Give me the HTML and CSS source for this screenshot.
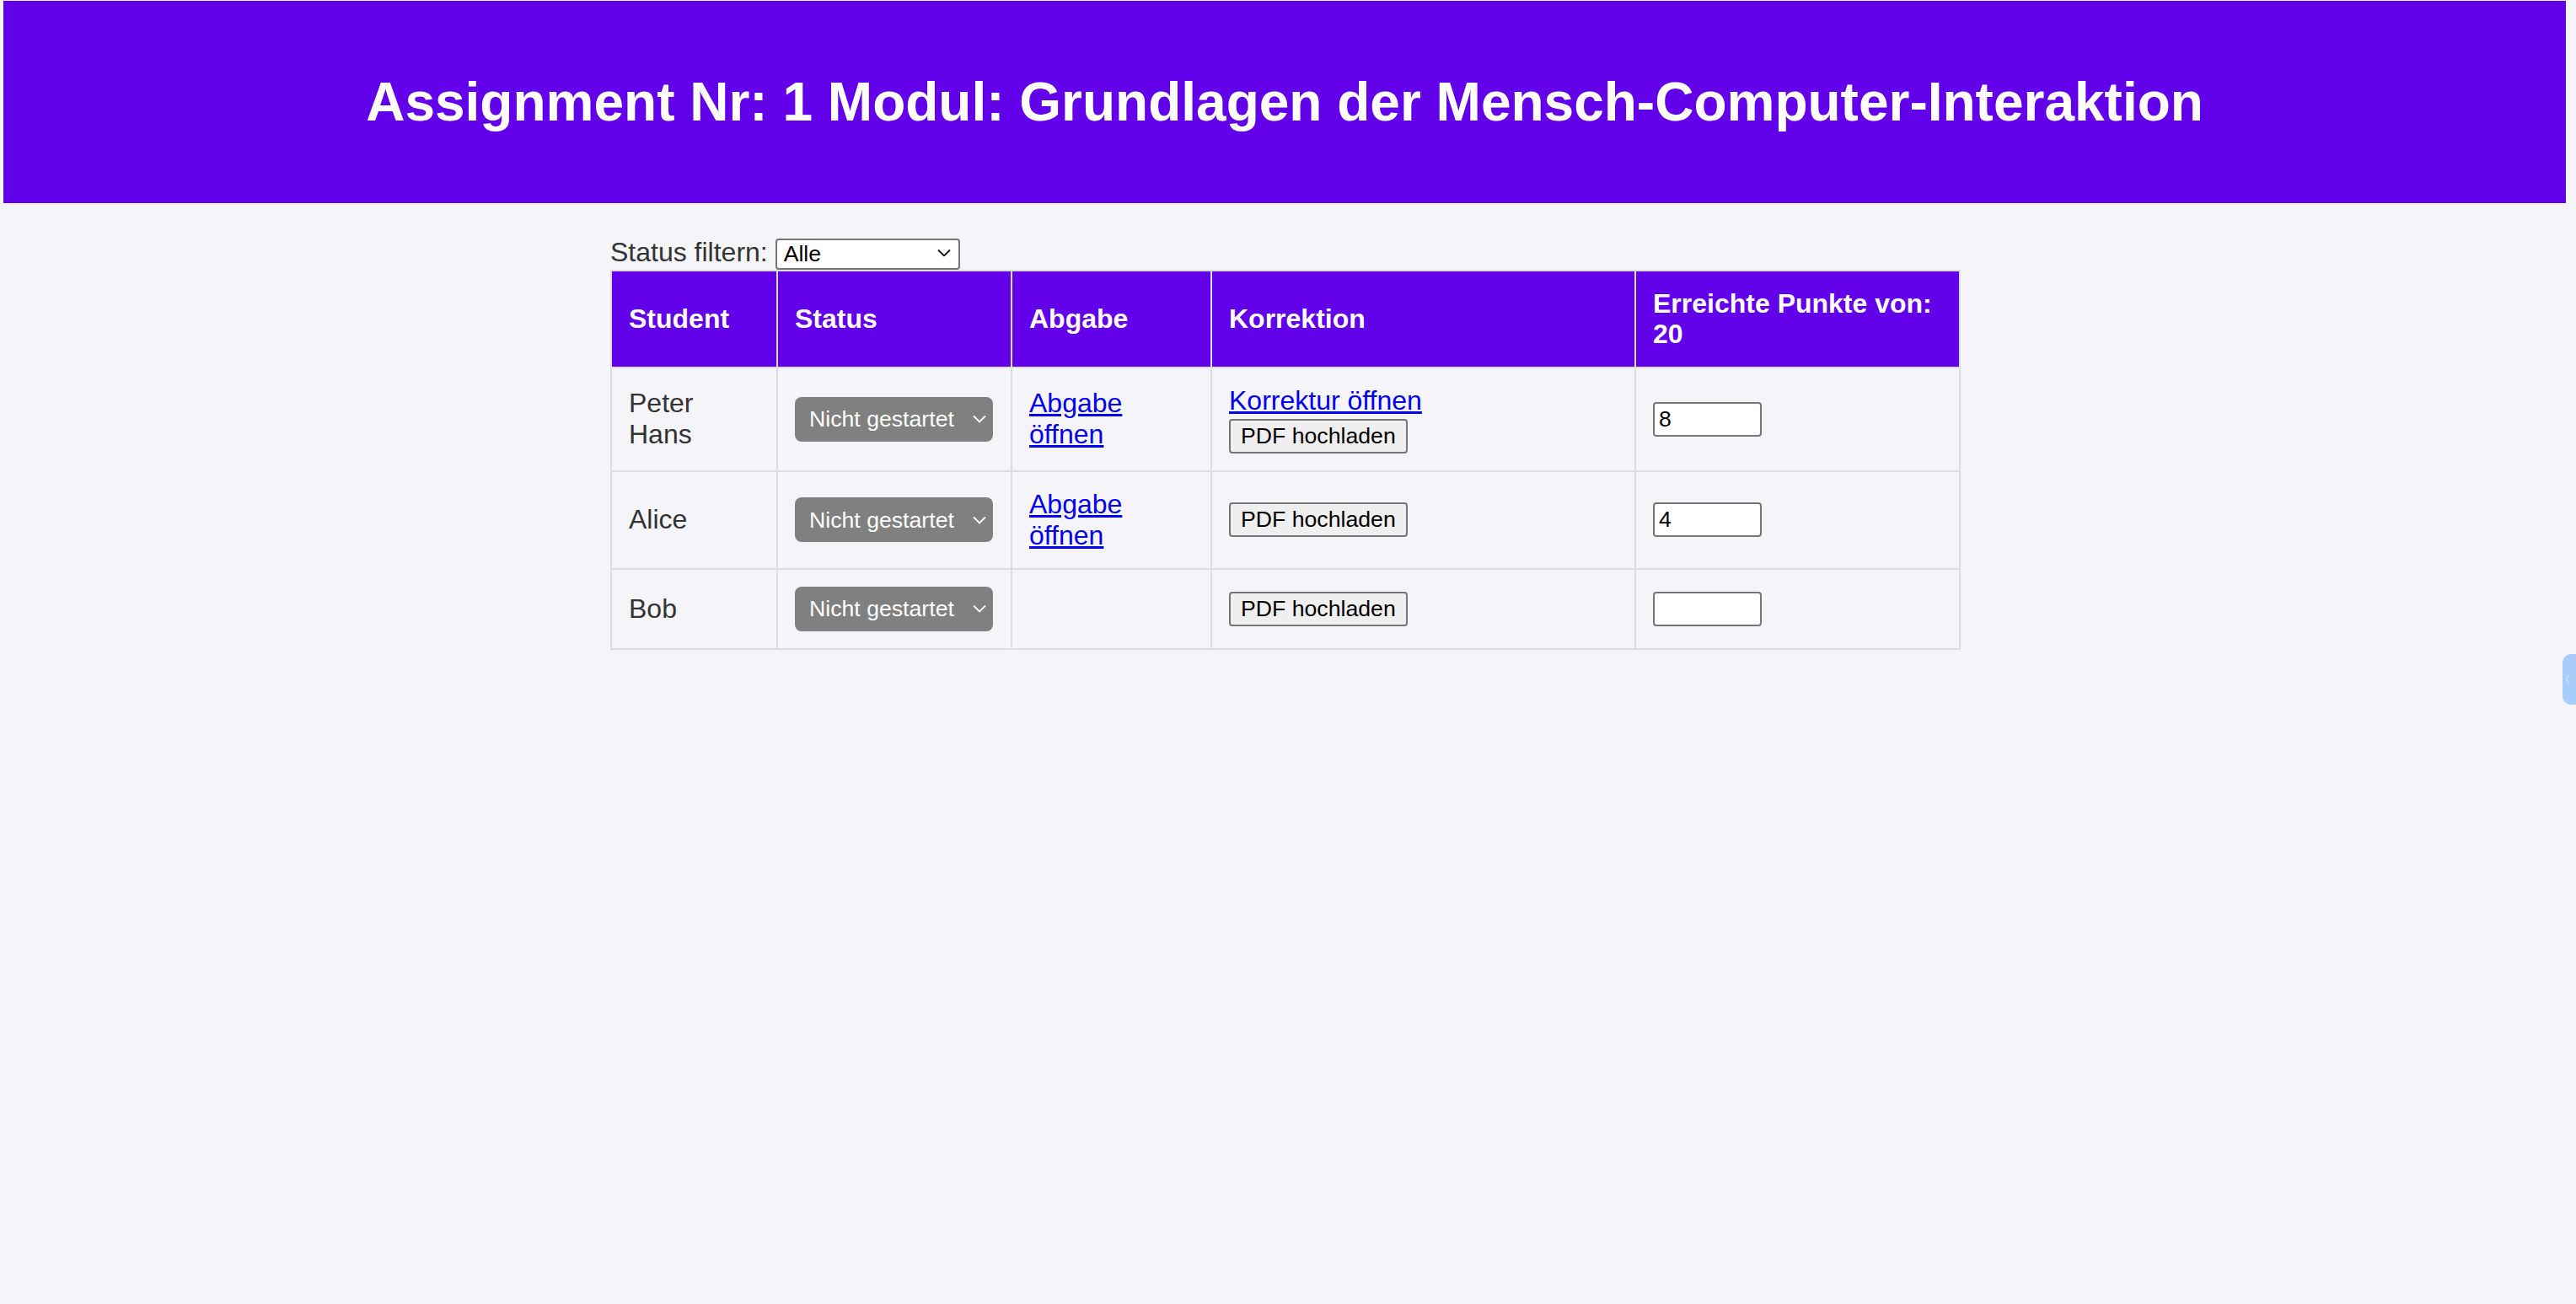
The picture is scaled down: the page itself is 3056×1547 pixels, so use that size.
FILE: index.html
```html
<!DOCTYPE html>
<html lang="de">
<head>
<meta charset="utf-8">
<title>Assignment Nr: 1</title>
<link rel="stylesheet" href="styles.css">
</head>
<body>
<header class="page-header">
  <h1 class="page-title">Assignment Nr: 1 Modul: Grundlagen der Mensch-Computer-Interaktion</h1>
</header>
<main class="content">
  <div class="filter">
    <label class="filter-label" for="statusFilter">Status filtern:</label>
    <span class="select-wrap"><select id="statusFilter" class="filter-select">
        <option>Alle</option>
        <option>Nicht gestartet</option>
        <option>In Bearbeitung</option>
        <option>Abgeschlossen</option>
      </select><svg class="chevron chevron-dark" viewBox="0 0 16 9" width="16" height="9" aria-hidden="true"><polyline points="1,1 8,8 15,1" fill="none" stroke="#111" stroke-width="1.8"/></svg></span>
  </div>
  <table class="grades">
    <colgroup>
      <col class="col-student">
      <col class="col-status">
      <col class="col-abgabe">
      <col class="col-korrektion">
      <col class="col-punkte">
    </colgroup>
    <thead>
      <tr>
        <th>Student</th>
        <th>Status</th>
        <th>Abgabe</th>
        <th>Korrektion</th>
        <th>Erreichte Punkte von: 20</th>
      </tr>
    </thead>
    <tbody>
      <tr>
        <td>Peter Hans</td>
        <td><span class="select-wrap"><select class="status-select">
            <option>Nicht gestartet</option>
            <option>In Bearbeitung</option>
            <option>Abgeschlossen</option>
          </select><svg class="chevron chevron-light" viewBox="0 0 16 9" width="16" height="9" aria-hidden="true"><polyline points="1,1 8,8 15,1" fill="none" stroke="#fff" stroke-width="1.8"/></svg></span></td>
        <td><a class="link" href="#">Abgabe öffnen</a></td>
        <td><a class="link" href="#">Korrektur öffnen</a><br><button class="upload-btn upload-btn-stacked" type="button">PDF hochladen</button></td>
        <td><input class="points-input" type="text" value="8"></td>
      </tr>
      <tr>
        <td>Alice</td>
        <td><span class="select-wrap"><select class="status-select">
            <option>Nicht gestartet</option>
            <option>In Bearbeitung</option>
            <option>Abgeschlossen</option>
          </select><svg class="chevron chevron-light" viewBox="0 0 16 9" width="16" height="9" aria-hidden="true"><polyline points="1,1 8,8 15,1" fill="none" stroke="#fff" stroke-width="1.8"/></svg></span></td>
        <td><a class="link" href="#">Abgabe öffnen</a></td>
        <td><button class="upload-btn" type="button">PDF hochladen</button></td>
        <td><input class="points-input" type="text" value="4"></td>
      </tr>
      <tr>
        <td>Bob</td>
        <td><span class="select-wrap"><select class="status-select">
            <option>Nicht gestartet</option>
            <option>In Bearbeitung</option>
            <option>Abgeschlossen</option>
          </select><svg class="chevron chevron-light" viewBox="0 0 16 9" width="16" height="9" aria-hidden="true"><polyline points="1,1 8,8 15,1" fill="none" stroke="#fff" stroke-width="1.8"/></svg></span></td>
        <td></td>
        <td><button class="upload-btn" type="button">PDF hochladen</button></td>
        <td><input class="points-input" type="text" value=""></td>
      </tr>
    </tbody>
  </table>
</main>
<div class="side-tab"><svg viewBox="0 0 8 12" width="8" height="12" aria-hidden="true"><polyline points="6,1 2,6 6,11" fill="none" stroke="#c9defd" stroke-width="1.5"/></svg></div>
</body>
</html>
```

FILE: styles.css
```css
* {
  box-sizing: border-box;
}

html {
  background: #f4f4f9;
}

body {
  margin: 0;
  padding: 1px 12px 0 4px;
  background: #f4f4f9;
  font-family: "Liberation Sans", Arial, sans-serif;
  font-size: 32px;
  color: #333;
}

.page-header {
  background: #6200ea;
  color: #fff;
  padding: 40px;
  text-align: center;
}

.page-title {
  margin: 43px 0;
  font-size: 64px;
  font-weight: bold;
  line-height: normal;
}

.content {
  width: 1600px;
  margin: 0 auto;
  padding-top: 40px;
}

.filter {
  line-height: normal;
}

.select-wrap {
  position: relative;
  display: inline-block;
}

.chevron {
  position: absolute;
  top: 50%;
  transform: translateY(-50%);
  pointer-events: none;
}

.chevron-dark {
  right: 11px;
}

.chevron-light {
  right: 8px;
  height: 10px;
  width: 16px;
}

.filter-select {
  -webkit-appearance: none;
  appearance: none;
  width: 219px;
  height: 37px;
  margin: 0;
  padding: 0 30px 0 8px;
  border: 2px solid #767676;
  border-radius: 4px;
  background: #fff;
  color: #000;
  font-family: "Liberation Sans", Arial, sans-serif;
  font-size: 26.67px;
}

.grades {
  width: 1600px;
  table-layout: fixed;
  border-collapse: collapse;
  border: 2px solid #ddd;
}

.col-student { width: 197px; }
.col-status { width: 278px; }
.col-abgabe { width: 237px; }
.col-korrektion { width: 503px; }
.col-punkte { width: 385px; }

.grades th,
.grades td {
  border: 2px solid #ddd;
  padding: 20px;
  text-align: left;
  vertical-align: middle;
  line-height: normal;
}

.grades th {
  background: #6200ea;
  color: #fff;
  font-weight: bold;
  line-height: 36.5px;
}

.link {
  color: #0000ee;
  text-decoration: underline;
}

.status-select {
  -webkit-appearance: none;
  appearance: none;
  width: 235px;
  height: 53px;
  margin: 0;
  padding: 0 34px 0 17px;
  border: none;
  border-radius: 8px;
  background: #808080;
  color: #fff;
  font-family: "Liberation Sans", Arial, sans-serif;
  font-size: 26.67px;
}

.upload-btn {
  height: 41px;
  margin: 0;
  padding: 0 12px;
  border: 2px solid #767676;
  border-radius: 4px;
  background: #efefef;
  color: #000;
  font-family: "Liberation Sans", Arial, sans-serif;
  font-size: 26.67px;
}

.upload-btn-stacked {
  margin-top: 3px;
}

.points-input {
  width: 129px;
  height: 41px;
  margin: 0;
  padding: 0 5px;
  border: 2px solid #767676;
  border-radius: 4px;
  background: #fff;
  color: #000;
  font-family: "Liberation Sans", Arial, sans-serif;
  font-size: 26.67px;
}

.side-tab {
  position: fixed;
  right: 0;
  top: 776px;
  width: 16px;
  height: 60px;
  border-radius: 10px 0 0 10px;
  background: #a8cdfb;
  display: flex;
  align-items: center;
  justify-content: flex-start;
  padding-left: 2px;
}
```
